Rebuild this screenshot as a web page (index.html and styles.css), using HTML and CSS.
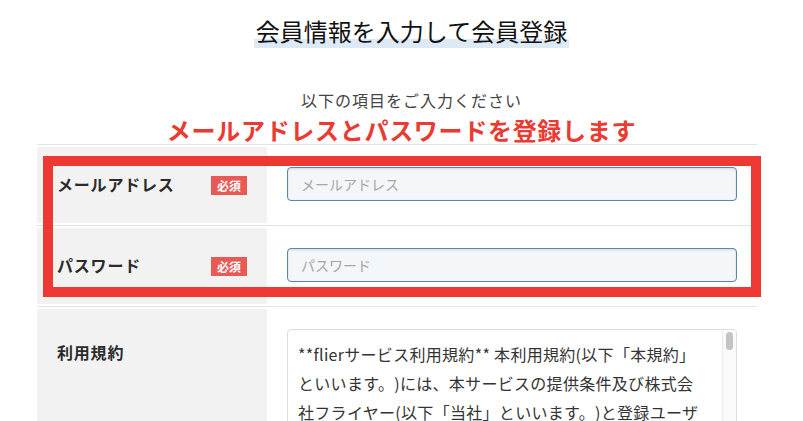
FILE: index.html
```html
<!DOCTYPE html>
<html>
<head>
    <meta charset="utf-8">
    <title>会員登録</title>
    <link rel="stylesheet" href="styles.css">
</head>
<body>
    <div class="page">
        <h1 class="page-title"><span>会員情報を入力して会員登録</span></h1>
        <p class="lead">以下の項目をご入力ください</p>
        <p class="note">メールアドレスとパスワードを登録します</p>

        <div class="form-table">
            <div class="form-row">
                <div class="form-label">
                    <span>メールアドレス</span>
                    <span class="required">必須</span>
                </div>
                <div class="form-field">
                    <input type="email" placeholder="メールアドレス">
                </div>
            </div>
            <div class="form-row">
                <div class="form-label">
                    <span>パスワード</span>
                    <span class="required">必須</span>
                </div>
                <div class="form-field">
                    <input type="password" placeholder="パスワード">
                </div>
            </div>
            <div class="form-row form-row-top">
                <div class="form-label">
                    <span>利用規約</span>
                </div>
                <div class="form-field">
                    <div class="terms-wrap">
                        <textarea class="terms" readonly>**flierサービス利用規約** 本利用規約(以下「本規約」といいます。)には、本サービスの提供条件及び株式会社フライヤー(以下「当社」といいます。)と登録ユーザーの皆様との間の権利義務関係が定められています。本サービスの利用に際しては、本規約の全文をお読みいただいたうえで、本規約に同意いただく必要があります。</textarea>
                        <div class="terms-bar"><div class="terms-thumb"></div></div>
                    </div>
                </div>
            </div>

            <!-- 注釈の赤枠 -->
            <div class="highlight-box"></div>
        </div>
    </div>
</body>
</html>
```

FILE: styles.css
```css
body {
    margin: 0;
    padding: 0;
    background-color: #fff;
    color: #333;
    font-family: "Noto Sans CJK JP", "Noto Sans", sans-serif;
}

.page {
    width: 803px;
}

.page-title {
    margin: 0;
    padding: 14px 0 0 20px;
    text-align: center;
    font-size: 24px;
    font-weight: normal;
    line-height: 34px;
}

.page-title span {
    display: inline-block;
    padding: 0 2px;
    color: #111;
    background: linear-gradient(to bottom, transparent 25px, #dde9f5 25px);
}

.lead {
    margin: 40px 0 0;
    padding-left: 20px;
    text-align: center;
    font-size: 16px;
    line-height: 24px;
    letter-spacing: 1px;
    color: #444;
}

.note {
    margin: 3px 0 -1px;
    text-align: center;
    font-size: 24px;
    font-weight: bold;
    line-height: 30px;
    letter-spacing: 0.7px;
    color: #ea3a31;
}

.form-table {
    position: relative;
    width: 720px;
    margin-left: 37px;
}

.form-row {
    display: grid;
    grid-template-columns: 230px 1fr;
    border-top: 1px solid #e4e4e4;
    padding: 2px 0;
}

.form-label {
    display: flex;
    align-items: center;
    justify-content: space-between;
    height: 76px;
    padding: 0 20px;
    background-color: #f2f2f2;
    font-size: 16px;
    font-weight: bold;
    letter-spacing: 0.8px;
    color: #2b2b2b;
}

.form-label span:first-child {
    margin-top: -3px;
}

.required {
    display: inline-block;
    width: 36px;
    height: 19px;
    line-height: 19px;
    text-align: center;
    background-color: #ea5a55;
    color: #fff;
    font-size: 12px;
    letter-spacing: 0;
}

.form-field {
    display: flex;
    align-items: center;
    padding: 0 20px;
}

.form-field input {
    box-sizing: border-box;
    width: 100%;
    height: 34px;
    margin-top: -2px;
    padding: 0 13px;
    border: 1px solid #5a86aa;
    border-radius: 4px;
    background-color: #f4f7fa;
    box-shadow: inset 0 1px 3px rgba(0, 0, 0, 0.12);
    font-family: inherit;
    font-size: 14px;
    color: #333;
}

.form-field input::placeholder {
    color: #a5a5a5;
}

.form-row-top .form-label {
    align-items: flex-start;
    height: 200px;
    padding-top: 34px;
    line-height: 24px;
}

.form-row-top .form-field {
    align-items: flex-start;
    padding-top: 20px;
}

.terms-wrap {
    position: relative;
    width: 100%;
}

.terms {
    display: block;
    box-sizing: border-box;
    width: 100%;
    height: 200px;
    padding: 10px 32px 10px 10px;
    border: 1px solid #dedede;
    border-radius: 4px;
    resize: none;
    font-family: inherit;
    font-size: 16px;
    line-height: 29px;
    letter-spacing: 0.3px;
    text-spacing-trim: space-all;
    color: #333;
    overflow: hidden;
}

/* スクロールバー */
.terms-bar {
    position: absolute;
    top: 1px;
    right: 1px;
    bottom: 1px;
    width: 13px;
    background-color: #fafafa;
    border-left: 1px solid #ececec;
    border-radius: 0 3px 3px 0;
}

.terms-thumb {
    width: 7px;
    height: 18px;
    margin: 2px 0 0 3px;
    border-radius: 4px;
    background-color: #c4c4c4;
}

.highlight-box {
    position: absolute;
    left: 6px;
    top: 12px;
    width: 718px;
    height: 141px;
    box-sizing: border-box;
    border: 10px solid #ee3833;
    pointer-events: none;
}
```
